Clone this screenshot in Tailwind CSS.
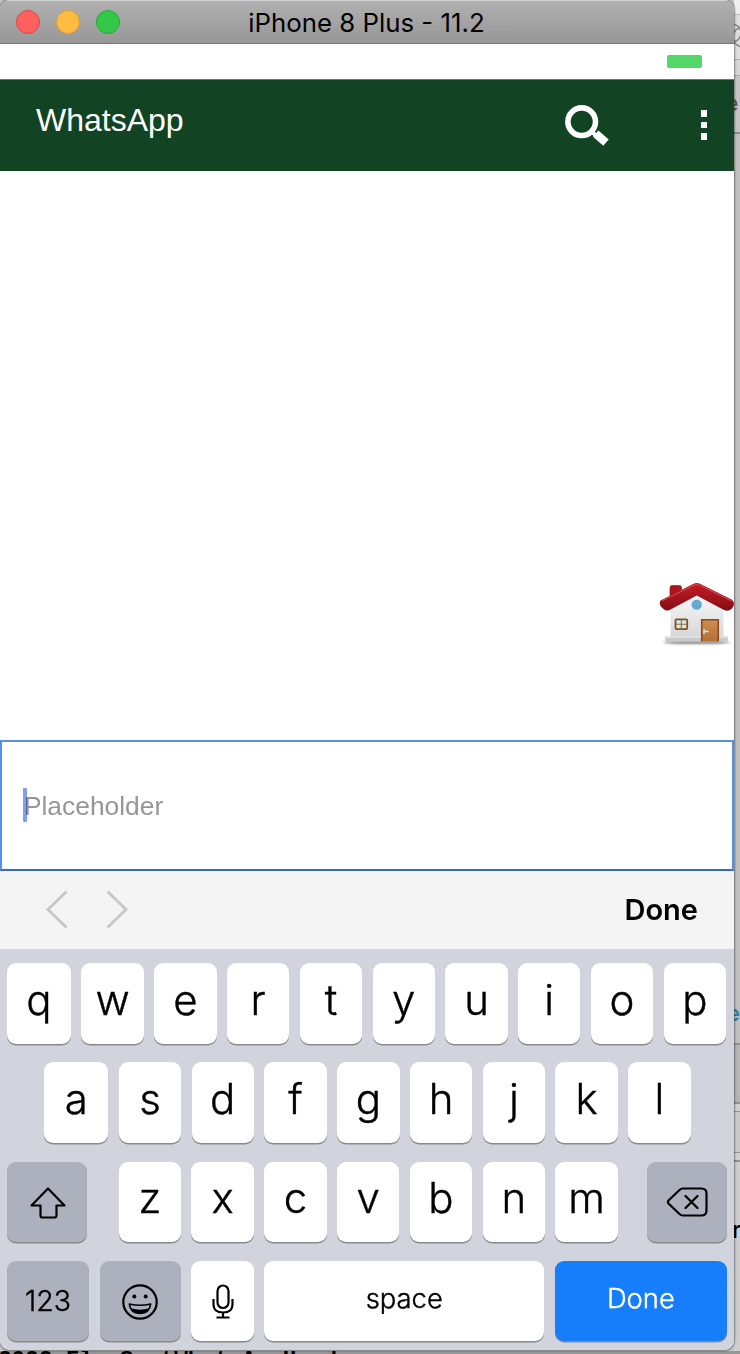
<!DOCTYPE html>
<html lang="en">
<head>
<meta charset="utf-8">
<title>iPhone 8 Plus - 11.2</title>
<script src="https://cdn.jsdelivr.net/npm/@tailwindcss/browser@4"></script>
</head>
<body class="w-[740px] h-[1354px] overflow-hidden bg-[#c6c6c6] font-['Inter',sans-serif] text-black">
<div class="relative flex flex-col w-[740px] h-[1354px] overflow-hidden">
<div class="flex h-[1351px] shrink-0">
  <main class="relative z-10 flex flex-col w-[734px] h-[1350px] shrink-0 rounded-[10px] overflow-hidden bg-white shadow-[0_0_2px_1px_#00000066]">
    <header class="relative h-11 shrink-0 flex items-center justify-center bg-linear-to-b from-[#b0b0b0] to-[#979797] border-t border-t-[#d2d2d2] border-b border-b-[#767676]">
      <div class="absolute left-4 top-[9px] flex gap-4">
        <span class="size-6 rounded-full bg-[#fc615d] border border-[#df4744]"></span>
        <span class="size-6 rounded-full bg-[#fdbc40] border border-[#dd9f33]"></span>
        <span class="size-6 rounded-full bg-[#34c84a] border border-[#27a833]"></span>
      </div>
      <h1 class="pt-0.5 pr-[1px] text-[25.800px] leading-none whitespace-nowrap">iPhone 8 Plus - 11.2</h1>
    </header>
    <div class="h-[35px] shrink-0 flex justify-end pr-[32.5px] pt-[11px]">
      <span class="w-[35px] h-[13px] rounded-[2px] bg-[#53d769]"></span>
    </div>
    <nav class="h-[92px] shrink-0 flex items-start bg-[#124424] border-t border-t-[#5c7f68] text-white">
      <span class="ml-9 mt-[22px] text-[32px] leading-[37px] font-['Liberation_Sans',sans-serif]">WhatsApp</span>
      <svg class="ml-auto mt-[25px] w-[45px] h-[41px]" viewBox="0 0 45 41" fill="none" stroke="white">
        <circle cx="17.700" cy="16.700" r="13.800" stroke-width="5.600"/>
        <path d="M27 26l5 4.500" stroke-width="4"/>
        <path d="M31.700 28.600L42 37.600" stroke-width="8.200"/>
      </svg>
      <span class="ml-[91.500px] mt-[30px] mr-[27px] flex flex-col gap-[5px]">
        <i class="w-[6.5px] h-[6.5px] bg-white"></i><i class="w-[6.5px] h-[6.5px] bg-white"></i><i class="w-[6.5px] h-[6.5px] bg-white"></i>
      </span>
    </nav>
    <section class="h-[569px] shrink-0 flex justify-end pt-[411px]">
      <svg class="w-[76px] h-[66px]" viewBox="0 0 76 66">
        <defs>
          <linearGradient id="roof" x1="0" y1="0" x2="0" y2="1"><stop stop-color="#c41d26"/><stop offset="1" stop-color="#860d14"/></linearGradient>
          <linearGradient id="wall" x1="0" y1="0" x2="0" y2="1"><stop stop-color="#fafafa"/><stop offset="1" stop-color="#d6d6d8"/></linearGradient>
          <linearGradient id="door" x1="0" y1="0" x2="0" y2="1"><stop stop-color="#cf8f50"/><stop offset="1" stop-color="#b06f35"/></linearGradient>
          <filter id="soft" x="-20%" y="-100%" width="140%" height="300%"><feGaussianBlur stdDeviation="1.2"/></filter>
        </defs>
        <ellipse cx="38.500" cy="60.500" rx="34" ry="1.600" fill="#888" filter="url(#soft)"/>
        <path d="M12 5.500q0-2 2-2h7.500q2 0 2 2V18H12z" fill="#a8161d" stroke="#8d1016" stroke-width=".6"/>
        <path d="M12.500 25L38.800 11 65.500 25V56H12.500z" fill="url(#wall)"/>
        <rect x="7.300" y="54.500" width="62.500" height="5" rx="1" fill="#c8c8ca"/>
        <rect x="8" y="54.500" width="61" height="1.200" fill="#ececec"/>
        <circle cx="38.700" cy="22.800" r="5.800" fill="#dbe6ee"/>
        <circle cx="38.700" cy="22.800" r="5" fill="#66a8cf"/>
        <path d="M5.500 27Q0 23 2.500 18.500L34.500 2.200Q38.800 0 43 2.200L74 17.800Q78 22 74 26.500Q70.500 30 66 28L38.800 13.500 11.500 28Q8 29.500 5.500 27z" fill="url(#roof)"/>
        <path d="M4 18.800L35 3.500Q38.800 1.500 42.500 3.500L73.500 19" fill="none" stroke="#d9545b" stroke-width=".9"/>
        <rect x="17.500" y="37.300" width="11.700" height="9.800" rx="1" fill="#cdece6" stroke="#884d22" stroke-width="1.800"/>
        <path d="M23.300 38v9.500M18 42.300h11" stroke="#9a6b36" stroke-width="1.100"/>
        <path d="M43.700 59.500V37.700h16.600V59.500" fill="url(#door)" stroke="#8c471d" stroke-width="1.500"/>
        <path d="M46 47v5M46 49.500h4.500" stroke="#ddd" stroke-width="1.500"/>
      </svg>
    </section>
    <label class="h-[131px] shrink-0 flex items-center pl-[21.400px] border-2 border-[#5590ec] border-b-[#3a67bd]">
      <span class="w-[3.500px] h-[34px] -mt-[2px] rounded-[1px] bg-[#809ef0]"></span>
      <span class="-ml-[3px] pt-px text-[26.400px] leading-[34px] font-['Liberation_Sans',sans-serif] text-[#969696] mix-blend-multiply">Placeholder</span>
    </label>
    <div class="h-[78px] shrink-0 flex items-center bg-[#f4f4f4] pl-[45px] pr-9">
      <svg class="w-[84px] h-10" viewBox="0 0 84 40" fill="none" stroke="#c7c7c7" stroke-width="2.800"><path d="M21.500 1.500L3 19.500 21.500 37.500M62.500 1.500L81 19.500 62.500 37.500"/></svg>
      <span class="ml-auto text-[29px] font-semibold">Done</span>
    </div>
    <section class="flex-1 bg-[#d1d4dc] pt-[14px] flex flex-col gap-[19.300px] text-[42px] leading-none font-light [&_b]:flex [&_b]:h-[80.500px] [&_b]:w-[62.400px] [&_b]:shrink-0 [&_b]:items-center [&_b]:justify-center [&_b]:rounded-[9px] [&_b]:bg-white [&_b]:pb-[7px] [&_b]:font-light [&_b]:[-webkit-text-stroke:0.4px_currentColor] [&_b]:shadow-[0_1.5px_0_#898a8e]">
      <div class="flex gap-[10.400px] pl-[7px] h-[80px]">
        <b class="!w-[64px]">q</b><b>w</b><b>e</b><b>r</b><b>t</b><b>y</b><b>u</b><b>i</b><b>o</b><b>p</b>
      </div>
      <div class="flex gap-[10.400px] pl-[44.400px] h-[80px]">
        <b class="!w-[64px]">a</b><b>s</b><b>d</b><b>f</b><b>g</b><b>h</b><b>j</b><b>k</b><b>l</b>
      </div>
      <div class="flex gap-[10.400px] pl-[7px] h-[80px]">
        <b class="!w-[80px] !bg-[#adb1bd] mr-[21.300px] !pb-0">
          <svg class="size-10" viewBox="0 0 40 40" fill="none" stroke="black" stroke-width="2.200" stroke-linejoin="round"><path d="M21 6.500L37.500 23.500H29.500V33.500Q29.500 35.500 27.500 35.500H15.500Q13.500 35.500 13.500 33.500V23.500H4.500z"/></svg>
        </b>
        <b>z</b><b>x</b><b>c</b><b>v</b><b>b</b><b>n</b><b>m</b>
        <b class="!w-[80px] !bg-[#adb1bd] ml-[18.700px] !pb-0">
          <svg class="w-[42px] h-[32px] mt-px" viewBox="0 0 42 32" fill="none" stroke="black" stroke-width="2.200" stroke-linejoin="round" stroke-linecap="round"><path d="M17 2.500H35.500Q40.500 2.500 40.500 7.500V24.500Q40.500 29.500 35.500 29.500H17Q15 29.500 13.500 28L2.500 17.500Q1.300 16 2.500 14.500L13.500 4Q15 2.500 17 2.500zM19.500 10L31.500 22M31.500 10L19.500 22"/></svg>
        </b>
      </div>
      <div class="flex gap-[10.400px] pl-[7px] h-[80px]">
        <b class="!w-[82px] !bg-[#adb1bd] !pb-0 text-[28.500px]">123</b>
        <b class="!w-[81px] !bg-[#adb1bd] !pb-0 ml-[.400px]">
          <svg class="size-9 mt-px" viewBox="0 0 36 36" fill="none" stroke="black" stroke-width="2.200"><circle cx="18" cy="18" r="16.700"/><circle cx="12.300" cy="12.500" r="2" fill="black" stroke="none"/><circle cx="23.700" cy="12.500" r="2" fill="black" stroke="none"/><path d="M7.300 20Q18 22.500 28.700 20Q27.500 29.500 18 29.500T7.300 20z" stroke-width="1.700" stroke-linejoin="round"/><path d="M9 24.300Q18 27 27 24.300Q24.500 29.500 18 29.500T9 24.300z" fill="black" stroke="none"/></svg>
        </b>
        <b class="!pb-0">
          <svg class="w-6 h-9 mt-[2px] ml-px" viewBox="0 0 24 36" fill="none" stroke="black" stroke-width="2.200"><rect x="6.500" y="1.500" width="11" height="22.500" rx="5.500"/><path d="M2.500 15v5.500Q2.500 28.500 12 28.500T21.500 20.500V15M12 28.500v5M5.500 33.500h13"/></svg>
        </b>
        <b class="!w-[280.500px] !pb-1 text-[27.400px]">space</b>
        <b class="!w-[172px] !bg-[#167efb] !pb-1 text-[27.400px] text-white">Done</b>
      </div>
    </section>
  </main>
  <aside class="w-[6px] h-[1351px] flex flex-col bg-[#c5c5c5] overflow-hidden">
    <div class="h-[15px] shrink-0 bg-[#eeeeee] border-b border-[#bdbdbd]"></div>
    <div class="h-[45px] shrink-0 bg-[#dedede] border-b border-[#aaa] flex items-center"><svg class="w-[6px] h-7 shrink-0" viewBox="0 0 6 28" fill="none" stroke="#888" stroke-width="1.500"><circle cx="-2" cy="10" r="9"/><circle cx="9" cy="14" r="10"/></svg></div>
    <div class="h-4 shrink-0 bg-[#d5d5d5] border-b border-[#aaa]"></div>
    <div class="h-[58px] shrink-0 border-b-2 border-[#8c8c8c] pt-[14px]"><span class="block -ml-[8px] text-[21px] leading-7 font-medium text-[#555568]">e</span></div>
    <div class="h-[911px] shrink-0 bg-[#c0c0c0] border-b-2 border-[#929292] pt-[865px]"><span class="block -ml-[7px] text-[22px] leading-7 font-semibold text-[#357f98]">e</span></div>
    <div class="h-[59px] shrink-0 bg-[#b5b5b5] border-b-2 border-[#929292]"></div>
    <div class="h-[8px] shrink-0 bg-[#d0d0d0] border-b border-[#929292]"></div>
    <div class="h-[41px] shrink-0 bg-[#cbcbcb] border-b border-[#929292]"></div>
    <div class="h-[9px] shrink-0 bg-[#d0d0d0] border-b-2 border-[#929292]"></div>
    <div class="flex-1 bg-[#cecece] pt-[54px]"><span class="block -ml-[2px] text-[24px] leading-7 font-medium">r</span></div>
  </aside>
</div>
<footer class="h-[3px] overflow-hidden bg-[#969696]">
  <p class="-mt-[2px] -ml-[2px] whitespace-pre font-['Liberation_Mono',monospace] font-bold text-[22.600px] leading-[23px]">2022 Flm SentWhatsAppHead</p>
</footer>
</div>
</body>
</html>
